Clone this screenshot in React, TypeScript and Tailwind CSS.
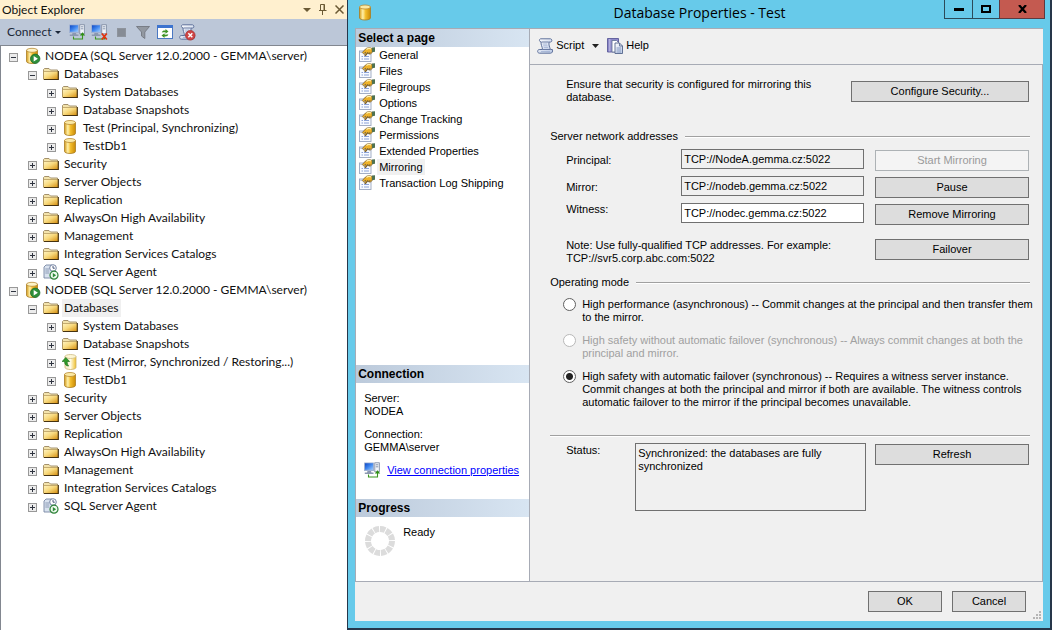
import React, { useState } from "react";

type IconKind = "server" | "folder" | "database" | "restoring" | "agent";

interface TreeNode {
  label: string;
  icon: IconKind;
  level: 0 | 1 | 2;
  open?: boolean;
  selected?: boolean;
}

const commonNodes: TreeNode[] = [
  { label: "Security", icon: "folder", level: 1 },
  { label: "Server Objects", icon: "folder", level: 1 },
  { label: "Replication", icon: "folder", level: 1 },
  { label: "AlwaysOn High Availability", icon: "folder", level: 1 },
  { label: "Management", icon: "folder", level: 1 },
  { label: "Integration Services Catalogs", icon: "folder", level: 1 },
  { label: "SQL Server Agent", icon: "agent", level: 1 },
];

const tree: TreeNode[] = [
  { label: "NODEA (SQL Server 12.0.2000 - GEMMA\\server)", icon: "server", level: 0, open: true },
  { label: "Databases", icon: "folder", level: 1, open: true },
  { label: "System Databases", icon: "folder", level: 2 },
  { label: "Database Snapshots", icon: "folder", level: 2 },
  { label: "Test (Principal, Synchronizing)", icon: "database", level: 2 },
  { label: "TestDb1", icon: "database", level: 2 },
  ...commonNodes,
  { label: "NODEB (SQL Server 12.0.2000 - GEMMA\\server)", icon: "server", level: 0, open: true },
  { label: "Databases", icon: "folder", level: 1, open: true, selected: true },
  { label: "System Databases", icon: "folder", level: 2 },
  { label: "Database Snapshots", icon: "folder", level: 2 },
  { label: "Test (Mirror, Synchronized / Restoring...)", icon: "restoring", level: 2 },
  { label: "TestDb1", icon: "database", level: 2 },
  ...commonNodes,
];

const pages = [
  "General",
  "Files",
  "Filegroups",
  "Options",
  "Change Tracking",
  "Permissions",
  "Extended Properties",
  "Mirroring",
  "Transaction Log Shipping",
];

const indent = { 0: "pl-2", 1: "pl-[27px]", 2: "pl-[46px]" };

function Gradients() {
  return (
    <svg width="0" height="0" className="absolute" aria-hidden="true">
      <defs>
        <linearGradient id="gold" x1="0" x2="1">
          <stop offset="0" stopColor="#d39a1c" />
          <stop offset="0.3" stopColor="#fff0a8" />
          <stop offset="0.55" stopColor="#f3bd2c" />
          <stop offset="1" stopColor="#c98a06" />
        </linearGradient>
        <linearGradient id="pale" x1="0" x2="1">
          <stop offset="0" stopColor="#efe7c2" />
          <stop offset="0.5" stopColor="#fffbe6" />
          <stop offset="1" stopColor="#f0c02c" />
        </linearGradient>
        <linearGradient id="folder" x1="0" y1="0" x2="1" y2="1">
          <stop offset="0" stopColor="#fff3c0" />
          <stop offset="0.45" stopColor="#f8d97c" />
          <stop offset="1" stopColor="#d48c0c" />
        </linearGradient>
        <linearGradient id="screen" x1="0" y1="0" x2="1" y2="1">
          <stop offset="0" stopColor="#0f49c4" />
          <stop offset="0.5" stopColor="#3f86ee" />
          <stop offset="1" stopColor="#9accff" />
        </linearGradient>
        <linearGradient id="paper" x1="0" y1="0" x2="1" y2="1">
          <stop offset="0" stopColor="#ffffff" />
          <stop offset="1" stopColor="#b9c8e4" />
        </linearGradient>
      </defs>
    </svg>
  );
}

function Cylinder({ className = "h-4 w-4" }: { className?: string }) {
  return (
    <svg viewBox="0 0 16 16" className={className} aria-hidden="true">
      <path d="M2.500 2.500v11c0 1 2.400 2 5.500 2s5.500-1 5.500-2v-11z" fill="url(#gold)" stroke="#a97d24" strokeWidth="0.8" />
      <ellipse cx="8" cy="2.500" rx="5.500" ry="2" fill="#fbe9a4" stroke="#b98c35" strokeWidth="0.8" />
    </svg>
  );
}

function TreeIcon({ kind }: { kind: IconKind }) {
  if (kind === "folder") {
    return (
      <svg viewBox="0 0 16 16" className="h-4 w-4" aria-hidden="true">
        <path d="M.5 13V3.500l1-1h4.500l1.500 1.500h7v9z" fill="#f3e3ab" stroke="#9a8660" strokeWidth="0.9" />
        <path d="M1 13.500V5.500h14v8z" fill="url(#folder)" />
        <path d="M.5 13.500V5.500h14" fill="none" stroke="#b79c60" strokeWidth="0.8" />
        <path d="M1 13.500h14.300V5" fill="none" stroke="#463210" strokeWidth="1.200" />
      </svg>
    );
  }
  if (kind === "database") return <Cylinder />;
  if (kind === "restoring") {
    return (
      <svg viewBox="0 0 16 16" className="h-4 w-4" aria-hidden="true">
        <path d="M3 2.500v11c0 1 2.300 2 5.500 2s5.500-1 5.500-2v-11z" fill="url(#pale)" stroke="#c9b06c" strokeWidth="0.8" />
        <ellipse cx="8.500" cy="2.500" rx="5.500" ry="2" fill="#fdf6d4" stroke="#cdbb84" strokeWidth="0.8" />
        <path d="M3.800 3.500 7.600 7.500H5.200c0 2 .3 3.500 1.600 4.500C4 12 2.600 10.500 2.600 7.500H0z" fill="#2f9a2a" stroke="#146b14" strokeWidth="0.600" />
      </svg>
    );
  }
  if (kind === "server") {
    return (
      <svg viewBox="0 0 16 16" className="h-4 w-4 overflow-visible" aria-hidden="true">
        <path d="M.5 2.300v11.200c0 1 2.400 2 5.500 2s5.500-1 5.500-2V2.300z" fill="url(#gold)" stroke="#a97d24" strokeWidth="0.8" />
        <ellipse cx="6" cy="2.300" rx="5.500" ry="2" fill="#fdf3c6" stroke="#b98c35" strokeWidth="0.8" />
        <circle cx="9.200" cy="10.800" r="4.700" fill="#2e8f3a" stroke="#1b6a2a" strokeWidth="0.8" />
        <path d="M7.700 8v5.600l4.200-2.800z" fill="#fff" />
      </svg>
    );
  }
  return (
    <svg viewBox="0 0 16 16" className="h-4 w-4" aria-hidden="true">
      <path d="M1 3l2-2h6v13H1z" fill="#d9e2ef" stroke="#7787a3" strokeWidth="0.9" />
      <path d="M2.300 5h4M2.300 7h4M2.300 9h4" stroke="#8594b0" strokeWidth="0.9" />
      <circle cx="10" cy="4" r="3.300" fill="#fff" stroke="#66779a" strokeWidth="0.900" />
      <path d="M10 2v2.200h1.800" fill="none" stroke="#33446b" strokeWidth="0.900" />
      <circle cx="11" cy="11.200" r="4" fill="#eefaee" stroke="#2d8238" strokeWidth="1.200" />
      <path d="M9.800 8.900v4.600l3.300-2.300z" fill="#2d8a38" />
    </svg>
  );
}

function Computers({ mark }: { mark: "link" | "cut" }) {
  return (
    <svg viewBox="0 0 16 16" className="h-4 w-4 overflow-visible" aria-hidden="true">
      <rect x="0" y="0.500" width="10" height="8.500" rx="0.500" fill="#9fb1d3" />
      <rect x="1" y="1.300" width="8" height="6.500" fill="url(#screen)" />
      <path d="M3.500 9h3.500l.5 1.500h2V12H.8v-1.500h2.200z" fill="#8a97b0" />
      <rect x="10.800" y="0.800" width="4.500" height="9" fill="#f2f5fa" stroke="#76839b" strokeWidth="0.800" />
      <path d="M11.800 2.800h2.500M11.800 4.800h2.500" stroke="#6b7a98" strokeWidth="0.800" />
      <path d="M4.500 12.500v2.500h9V11" fill="none" stroke="#3b961f" strokeWidth="1.100" />
      {mark === "link" ? (
        <path d="M10.800 11.500 13.500 8.300l2.700 3.200z" fill="#2f8f14" />
      ) : (
        <path d="M10.800 9.500l5 6M15.800 9.500l-5 6" stroke="#e2340f" strokeWidth="1.800" />
      )}
    </svg>
  );
}

function ScrollIcon({ stop = false }: { stop?: boolean }) {
  return (
    <svg viewBox="0 0 16 16" className="h-4 w-4 overflow-visible" aria-hidden="true">
      <path
        d="M3.500.8h9.800c1.800 0 2.200 3 .4 3.200h-1.600c-.6 3 .6 5 1.300 7.500h2c.6 2-.3 3.700-1.800 3.700H2.500c-2.300 0-2.600-3.400-.3-3.700h3.300c-.2-3-1.800-4.700-1.400-7.500-2-.2-2.200-2.800-.6-3.200z"
        fill="url(#paper)"
        stroke="#5f719b"
        strokeWidth="1"
      />
      <path d="M4.500 4h7.300M5.500 11.500h7.500" stroke="#5f719b" strokeWidth="0.900" />
      <path d="M5.800 6h4.200M6.200 7.800h4.200M6.800 9.600h4.200M4 13.500h9" stroke="#9fb0d2" strokeWidth="0.800" />
      {stop && (
        <>
          <circle cx="11.300" cy="11.300" r="4.800" fill="#cf4545" stroke="#a52c2c" strokeWidth="0.700" />
          <path d="M9.300 9.300l4 4M13.300 9.300l-4 4" stroke="#fff" strokeWidth="1.500" />
        </>
      )}
    </svg>
  );
}

function HelpIcon() {
  return (
    <svg viewBox="0 0 16 16" className="h-4 w-4 overflow-visible" aria-hidden="true">
      <path d="M.5.5h11v13.500H.5z" fill="#8d89c9" stroke="#5a5a99" strokeWidth="0.900" />
      <path d="M2.800 1v12.500" stroke="#d9d7f2" strokeWidth="0.700" />
      <path d="M5 2.500h4.500l2 2v9.500H5z" fill="#fff" stroke="#6c7a9b" strokeWidth="0.900" />
      <path d="M8 5h4.500L15.500 8v7.500H8z" fill="url(#paper)" stroke="#53648b" strokeWidth="0.900" />
      <path d="M12.500 5v3h3" fill="none" stroke="#53648b" strokeWidth="0.800" />
      <path d="M9.500 10h4.500M9.500 12h4.500M9.500 14h4.500" stroke="#7d92be" strokeWidth="0.900" />
    </svg>
  );
}

function PageIcon() {
  return (
    <svg viewBox="0 0 16 16" className="h-4 w-4 overflow-visible" aria-hidden="true">
      <rect x="0.500" y="4" width="11.500" height="10.500" fill="#f7faff" stroke="#9aa6bf" strokeWidth="0.900" />
      <path d="M2.500 9.500h1.500M5 9.500h5M2.500 12h1.500M5 12h5" stroke="#8ba2d8" strokeWidth="1" />
      <path d="M1 5.200h5" stroke="#b9c6df" strokeWidth="1.200" />
      <path d="M3.300 5.500 6.500 2C8 .4 11.500.2 13.200 1.500v4L11 7.300 8.800 6 6.500 9l-1-1.200 1.300-2.600-2.300 1.600z" fill="#eeb22a" stroke="#6f5526" strokeWidth="0.700" />
      <path d="M7.500 2.500c1.300-1.200 3-1.300 4.500-.6" stroke="#fff0ad" strokeWidth="1.100" fill="none" />
      <path d="M6 8.800l3-3.600M9.500 7.200l1.700-2" stroke="#5a4a2c" strokeWidth="0.900" />
      <path d="M13 .6l3-.3v4.500l-3 .5z" fill="#4f7252" />
    </svg>
  );
}

function ProgressRing() {
  return (
    <svg viewBox="0 0 30 30" className="size-[30px] shrink-0" aria-hidden="true">
      <circle cx="15" cy="15" r="12" fill="none" stroke="#dcdcdc" strokeWidth="6" pathLength="120" strokeDasharray="8.500 1.500" />
    </svg>
  );
}

function Expander({ open }: { open?: boolean }) {
  return (
    <svg viewBox="0 0 9 9" className="mt-0.5 size-[9px] shrink-0" aria-hidden="true">
      <rect x="0.500" y="0.500" width="8" height="8" fill="#ececec" stroke="#989898" />
      <path d={open ? "M2 4.500h5" : "M2 4.500h5M4.500 2v5"} stroke="#2f3440" />
    </svg>
  );
}

function ObjectExplorer() {
  return (
    <aside className="flex w-[33%] shrink-0 flex-col bg-white font-['Lato','Open_Sans',sans-serif] text-[12px] text-[#101010]">
      <header className="flex h-[19px] items-center justify-between bg-[#fff0cf] pr-[3px] pl-0.5">
        <h2>Object Explorer</h2>
        <div className="flex items-center gap-2 text-[#6b5a35]">
          <button aria-label="Window position">
            <svg viewBox="0 0 8 4" className="h-1 w-2"><path d="M0 0h8L4 4z" fill="currentColor" /></svg>
          </button>
          <button aria-label="Auto hide">
            <svg viewBox="0 0 8 11" className="h-[11px] w-2" fill="none" stroke="currentColor">
              <path d="M1.500 6V.5h4V6M5 .5V6M0 6.500h7.500M3.500 7v4" />
            </svg>
          </button>
          <button aria-label="Close explorer">
            <svg viewBox="0 0 9 9" className="size-[9px]" stroke="currentColor" strokeWidth="1.500"><path d="M.5.5l8 8M8.500.5l-8 8" /></svg>
          </button>
        </div>
      </header>
      <div className="flex h-[26px] items-center gap-1.5 bg-[#bcc7d8] pl-[7px]">
        <button className="flex items-center gap-1 text-[#1b2738]">
          Connect
          <svg viewBox="0 0 6 3" className="h-[3px] w-1.5"><path d="M0 0h6L3 3z" fill="#1b2738" /></svg>
        </button>
        <button aria-label="Connect server" className="ml-0.5"><Computers mark="link" /></button>
        <button aria-label="Disconnect server"><Computers mark="cut" /></button>
        <button aria-label="Stop" className="flex w-4 justify-center">
          <svg viewBox="0 0 9 9" className="size-[9px]"><rect width="9" height="9" fill="#8e949d" /><rect x="1" y="1" width="7" height="7" fill="#868c95" /></svg>
        </button>
        <button aria-label="Filter">
          <svg viewBox="0 0 16 16" className="h-4 w-4"><path d="M1.500 2.500h13L9.800 8v6.500L6.500 12V8z" fill="#9298a1" stroke="#787d86" /></svg>
        </button>
        <button aria-label="Refresh explorer">
          <svg viewBox="0 0 16 16" className="h-4 w-4">
            <rect x="0.500" y="1.500" width="15" height="13" fill="#fff" stroke="#4a78c2" />
            <path d="M0 1h16v3H0z" fill="#3d74cf" />
            <path d="M4.800 8.500c.4-1.600 1.500-2.200 3.700-2V5l3 2.400-3 2.300V8.300c-1.500-.1-2.500 0-3.700.2zM11.300 10.300c-.4 1.700-1.500 2.300-3.800 2.100V14l-3-2.500 3-2.300v1.400c1.600.1 2.600 0 3.800-.3z" fill="#3f9426" />
          </svg>
        </button>
        <button aria-label="Stop script"><ScrollIcon stop /></button>
      </div>
      <ul role="tree" aria-label="Object Explorer" className="flex-1 border-t border-l border-[#828790] pt-px">
        {tree.map((node, i) => (
          <li
            key={i}
            role="treeitem"
            aria-level={node.level + 1}
            aria-expanded={!!node.open}
            aria-selected={!!node.selected}
            className={"flex h-[18px] items-center " + indent[node.level]}
          >
            <Expander open={node.open} />
            <span className={node.level === 0 ? "ml-2 w-[17px] shrink-0" : "ml-1.5 w-[19px] shrink-0"}>
              <TreeIcon kind={node.icon} />
            </span>
            <span className={"px-0.5 leading-[18px] whitespace-nowrap " + (node.selected ? "bg-[#f0f0f0]" : "")}>{node.label}</span>
          </li>
        ))}
      </ul>
    </aside>
  );
}

function PanelHeading({ children }: { children: React.ReactNode }) {
  return (
    <h3 className="h-[18px] shrink-0 bg-linear-to-r from-[#bccadb] to-[#d8e5f2] pl-0.5 text-[12px] leading-[18px] font-bold">{children}</h3>
  );
}

function PushButton({ children, className = "", disabled = false }: { children: React.ReactNode; className?: string; disabled?: boolean }) {
  return (
    <button
      disabled={disabled}
      className={"h-[21px] border border-[#707070] bg-[#dddddd] disabled:border-[#adb2b5] disabled:bg-[#f4f4f4] disabled:text-[#9a9a9a] " + className}
    >
      {children}
    </button>
  );
}

function Rule() {
  return <div className="h-0.5 flex-1 border-t border-b border-t-[#a0a0a0] border-b-white" />;
}

function GroupTitle({ children }: { children: React.ReactNode }) {
  return (
    <div className="flex items-center gap-[7px] pr-3">
      <h4>{children}</h4>
      <Rule />
    </div>
  );
}

const addresses = [
  { id: "principal", label: "Principal:", value: "TCP://NodeA.gemma.cz:5022", action: "Start Mirroring", readOnly: true, disabled: true, align: "" },
  { id: "mirror", label: "Mirror:", value: "TCP://nodeb.gemma.cz:5022", action: "Pause", readOnly: true, disabled: false, align: "" },
  { id: "witness", label: "Witness:", value: "TCP://nodec.gemma.cz:5022", action: "Remove Mirroring", readOnly: false, disabled: false, align: "self-start" },
];

const modes = [
  {
    id: "performance",
    text: "High performance (asynchronous) -- Commit changes at the principal and then transfer them to the mirror.",
    disabled: false,
  },
  {
    id: "safety-manual",
    text: "High safety without automatic failover (synchronous) -- Always commit changes at both the principal and mirror.",
    disabled: true,
  },
  {
    id: "safety-auto",
    text: "High safety with automatic failover (synchronous) -- Requires a witness server instance. Commit changes at both the principal and mirror if both are available. The witness controls automatic failover to the mirror if the principal becomes unavailable.",
    disabled: false,
  },
];

function MirroringPage() {
  const [mode, setMode] = useState("safety-auto");
  return (
    <div className="flex-1 border-r border-[#a7abb5] pt-[13px] pb-4 pl-5">
      <div className="flex items-center justify-between pr-[13px] pl-4">
        <p className="w-[250px]">Ensure that security is configured for mirroring this database.</p>
        <PushButton className="w-[178px] border-[#3c7fb1]">Configure Security...</PushButton>
      </div>

      <section className="mt-[26px]">
        <GroupTitle>Server network addresses</GroupTitle>
        <div className="mt-1.5 space-y-[5px] pr-[13px] pl-4">
          {addresses.map((a) => (
            <div key={a.id} className="grid h-[22px] grid-cols-[115px_1fr_154px] items-center">
              <label htmlFor={a.id} className={a.align}>{a.label}</label>
              <input
                id={a.id}
                defaultValue={a.value}
                readOnly={a.readOnly}
                className="mr-[11px] h-5 self-start border border-[#707070] bg-white px-0.5 outline-none read-only:bg-[#f0f0f0]"
              />
              <PushButton disabled={a.disabled} className="self-end">{a.action}</PushButton>
            </div>
          ))}
        </div>
        <div className="mt-3.5 flex items-start justify-between pr-[13px] pl-4">
          <p className="w-[270px]">Note: Use fully-qualified TCP addresses. For example: TCP://svr5.corp.abc.com:5022</p>
          <PushButton className="w-[154px]">Failover</PushButton>
        </div>
      </section>

      <section className="mt-[11px]">
        <GroupTitle>Operating mode</GroupTitle>
        <div className="mt-[9px] space-y-2.5 pl-[13px]">
          {modes.map((m) => (
            <label key={m.id} htmlFor={m.id} className={"flex items-start gap-1.5 " + (m.disabled ? "text-[#a0a0a0]" : "")}>
              <input
                id={m.id}
                type="radio"
                name="mode"
                checked={mode === m.id}
                disabled={m.disabled}
                onChange={() => setMode(m.id)}
                className="size-[13px] shrink-0 appearance-none rounded-full border border-[#606060] bg-white checked:bg-[radial-gradient(circle,#222_0_3px,#fff_4px)] disabled:border-[#b8b8b8]"
              />
              <span>{m.text}</span>
            </label>
          ))}
        </div>
      </section>

      <section className="mt-[26px]">
        <div className="flex pr-3"><Rule /></div>
        <div className="mt-1.5 grid grid-cols-[69px_1fr_154px] items-start pr-[13px] pl-4">
          <label htmlFor="status" className="pt-px">Status:</label>
          <textarea
            id="status"
            readOnly
            defaultValue="Synchronized: the databases are fully synchronized"
            className="mr-[9px] block h-[68px] resize-none border border-[#707070] bg-[#f0f0f0] px-0.5 py-[3px] outline-none"
          />
          <PushButton className="mt-px">Refresh</PushButton>
        </div>
      </section>
    </div>
  );
}

function PropertiesDialog() {
  return (
    <main className="flex min-w-0 flex-1 flex-col border-r-2 border-b-2 border-l border-[#26364a] bg-[#67caea] font-['Liberation_Sans',Arial,sans-serif] text-[11px] leading-[13px] text-black">
      <header className="grid h-7 grid-cols-[1fr_auto_1fr] pr-[5px] pl-1.5">
        <div className="pt-1 pl-[3px]"><Cylinder className="h-[17px] w-4" /></div>
        <h1 className="font-['Open_Sans',sans-serif] text-[14px] leading-[26px]">Database Properties - Test</h1>
        <div className="flex h-[19px] justify-end">
          <button aria-label="Minimize" className="flex w-[29px] items-center justify-center border border-t-0 border-[#2c4a59]">
            <span className="h-[3px] w-2.5 bg-black" />
          </button>
          <button aria-label="Maximize" className="flex w-[26px] items-center justify-center border-b border-[#2c4a59]">
            <span className="h-2 w-2.5 border-2 border-black" />
          </button>
          <button aria-label="Close" className="flex w-[46px] items-center justify-center border border-t-0 border-[#5d3a40] bg-[#c45a50]">
            <svg viewBox="0 0 9 8" className="h-2 w-[9px]" stroke="#000" strokeWidth="2.200"><path d="M1 0l7 8M8 0L1 8" /></svg>
          </button>
        </div>
      </header>

      <div className="mx-[7px] mb-[7px] flex flex-1 flex-col bg-[#f0f0f0]">
        <div className="flex flex-1 border-t border-b border-[#a7abb5]">
          <nav aria-label="Select a page" className="flex w-[175px] shrink-0 flex-col border-r border-l border-[#a7abb5] bg-white">
            <PanelHeading>Select a page</PanelHeading>
            <ul className="flex-1">
              {pages.map((p) => (
                <li key={p} className="flex h-4 items-center gap-0.5 pl-[3px]">
                  <PageIcon />
                  <a href="#" className={"px-0.5 leading-4 " + (p === "Mirroring" ? "bg-[#f0f0f0]" : "")}>{p}</a>
                </li>
              ))}
            </ul>
            <PanelHeading>Connection</PanelHeading>
            <div className="h-[116px] pt-[9px] pl-2">
              <p>Server:</p>
              <p>NODEA</p>
              <p className="mt-2.5">Connection:</p>
              <p>GEMMA\server</p>
              <div className="mt-2 flex items-center gap-[7px]">
                <Computers mark="link" />
                <a href="#" className="text-[#0000ff] underline">View connection properties</a>
              </div>
            </div>
            <PanelHeading>Progress</PanelHeading>
            <div className="flex h-16 items-start gap-2 pt-[9px] pl-[9px]">
              <ProgressRing />
              <p>Ready</p>
            </div>
          </nav>
          <div className="flex min-w-0 flex-1 flex-col">
            <div className="flex h-9 items-center border-b border-[#a7abb5] pb-0.5 pl-[7px]">
              <button className="flex items-center gap-[3px]"><ScrollIcon /> Script</button>
              <button aria-label="Script options" className="px-2">
                <svg viewBox="0 0 7 4" className="h-1 w-[7px]"><path d="M0 0h7L3.500 4z" fill="#222" /></svg>
              </button>
              <button className="flex items-center gap-[3px]"><HelpIcon /> Help</button>
            </div>
            <MirroringPage />
          </div>
        </div>
        <footer className="flex h-[39px] items-start justify-end">
          <PushButton className="mt-[9px] w-[74px]">OK</PushButton>
          <PushButton className="mt-[9px] ml-2.5 w-[74px]">Cancel</PushButton>
          <svg viewBox="0 0 9 9" className="mt-[29px] mr-px ml-[7px] size-[9px]" fill="#b5b5b5" aria-hidden="true">
            <path d="M6 0h2v2H6zM3 3h2v2H3zM6 3h2v2H6zM0 6h2v2H0zM3 6h2v2H3zM6 6h2v2H6z" />
          </svg>
        </footer>
      </div>
    </main>
  );
}

export default function App() {
  return (
    <div className="flex min-h-screen overflow-hidden bg-white">
      <Gradients />
      <ObjectExplorer />
      <PropertiesDialog />
    </div>
  );
}
